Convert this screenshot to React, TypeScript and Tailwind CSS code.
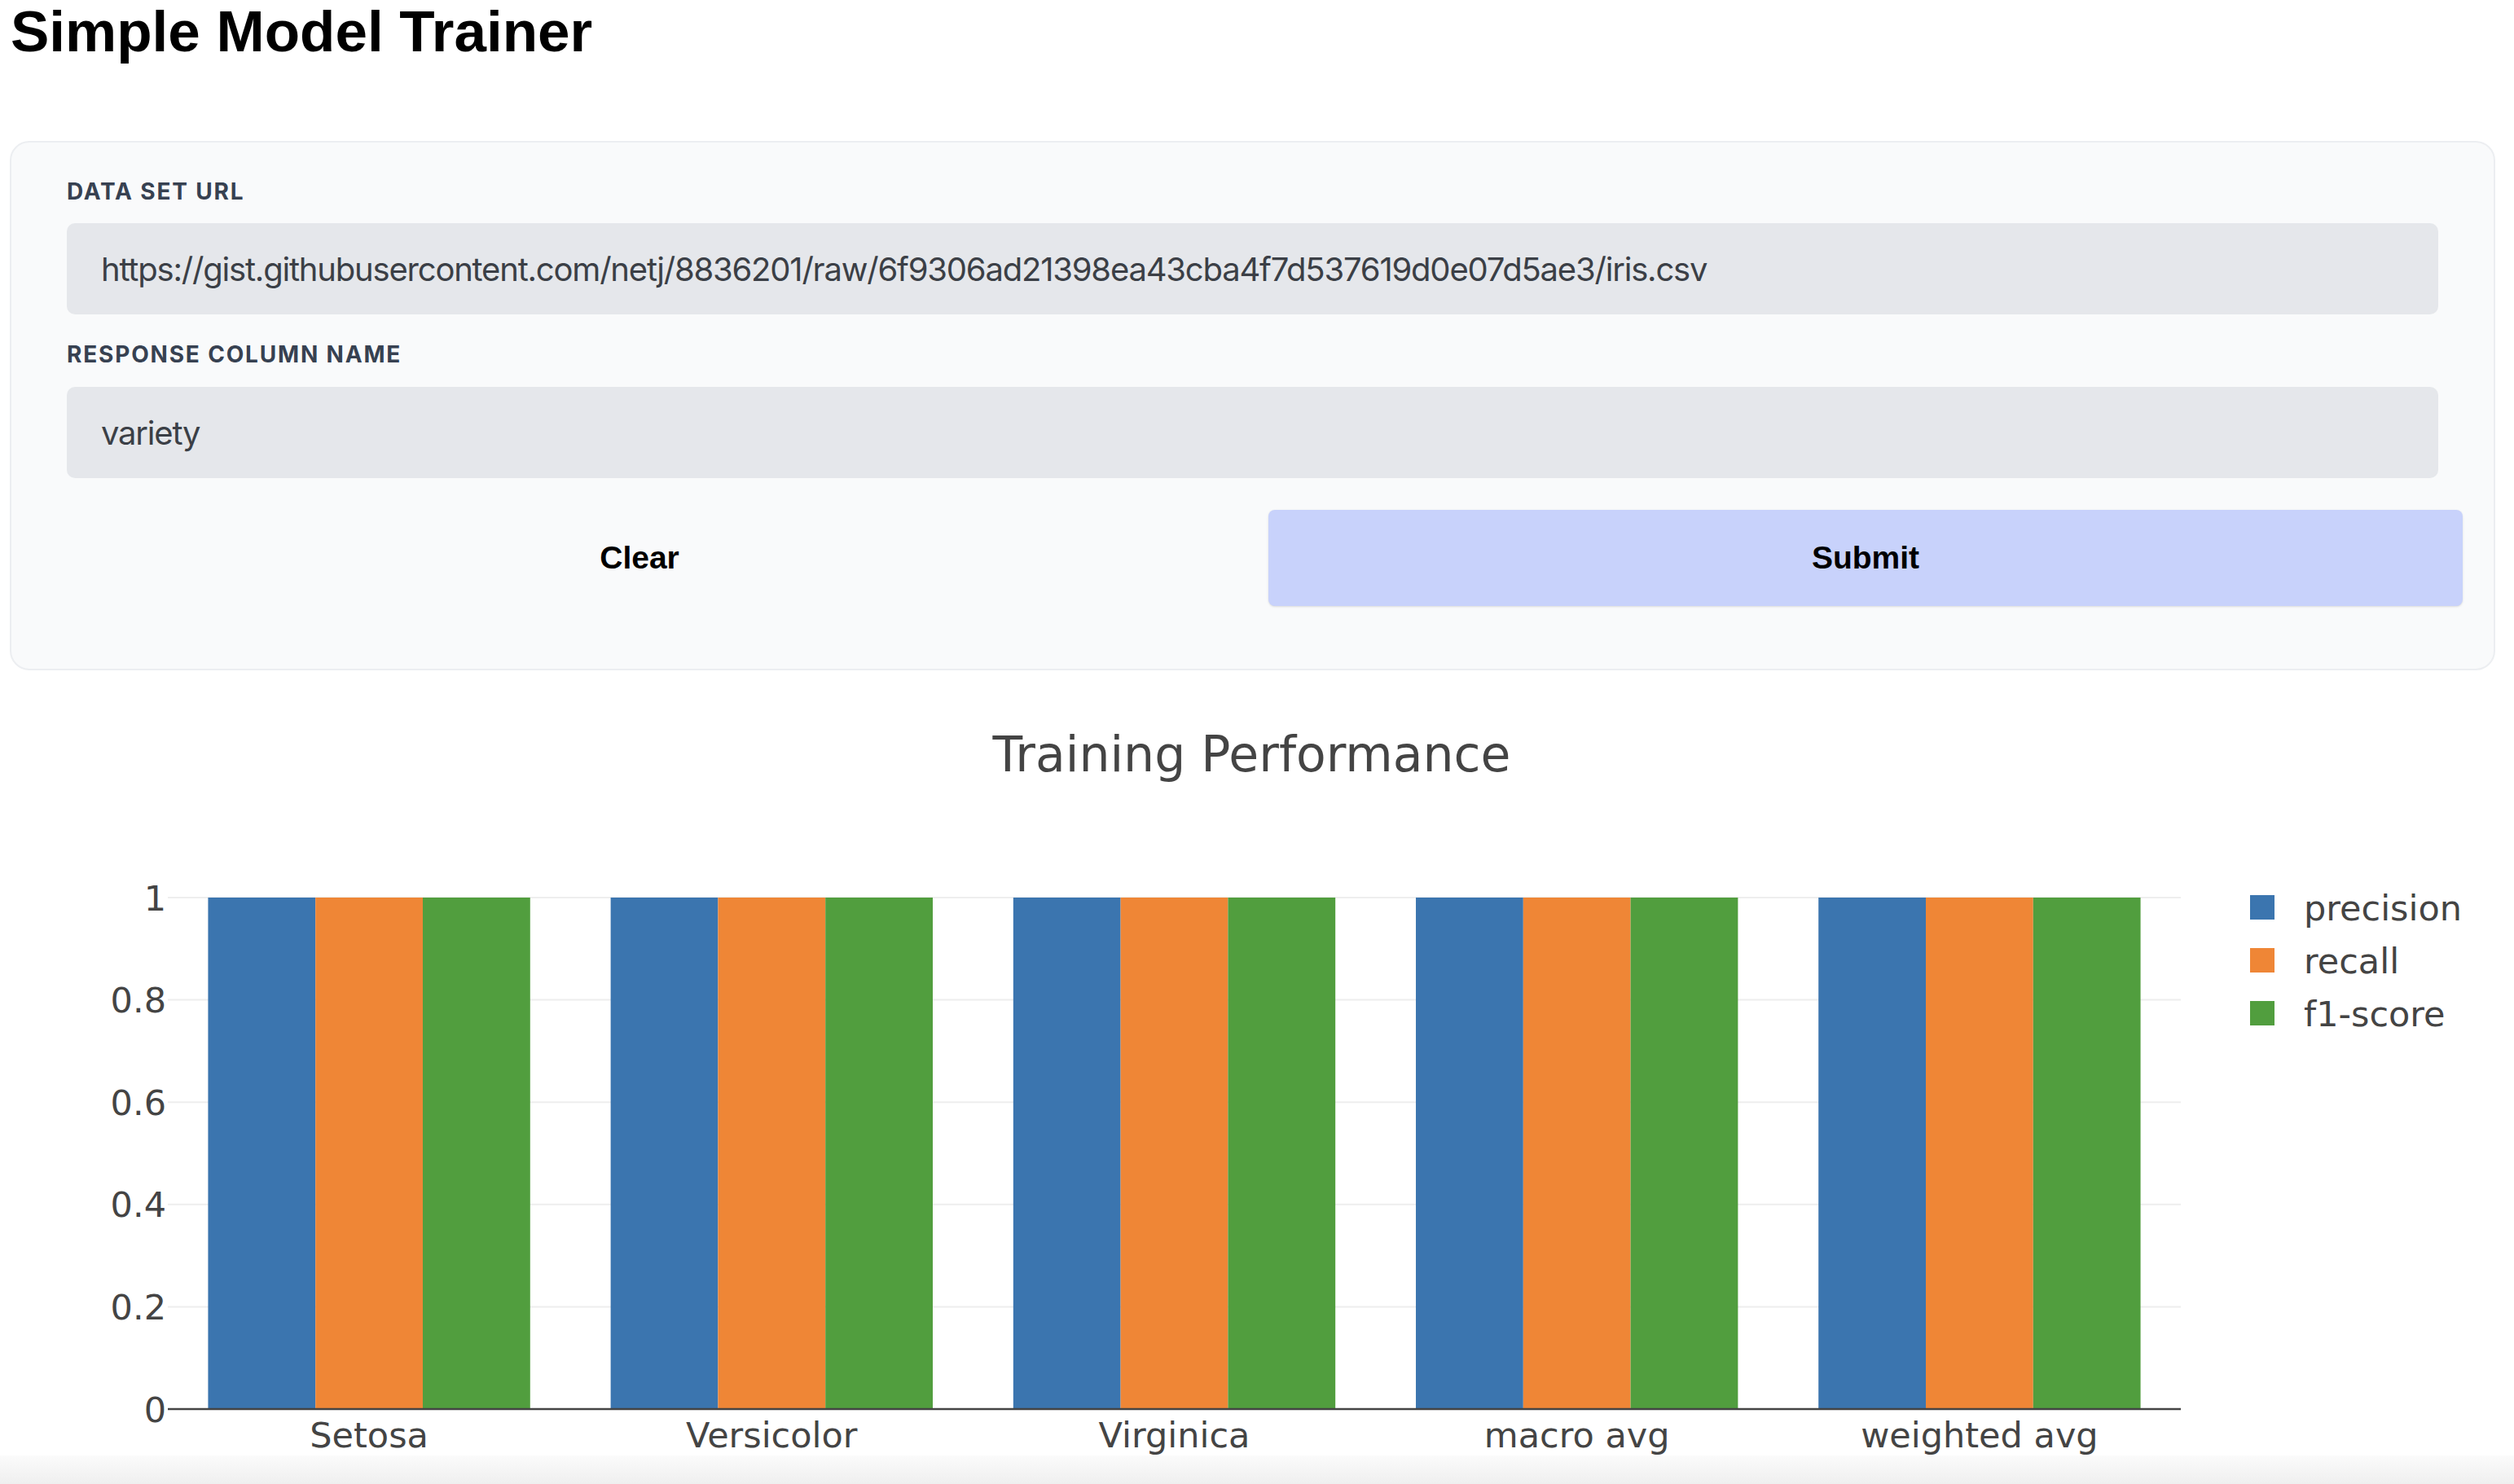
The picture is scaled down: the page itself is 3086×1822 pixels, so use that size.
import React from "react";

const categories = ["Setosa", "Versicolor", "Virginica", "macro avg", "weighted avg"];

const series = [
  { name: "precision", color: "#3b75af", values: [1, 1, 1, 1, 1] },
  { name: "recall", color: "#ef8636", values: [1, 1, 1, 1, 1] },
  { name: "f1-score", color: "#519e3e", values: [1, 1, 1, 1, 1] },
];

const DATA_URL =
  "https://gist.githubusercontent.com/netj/8836201/raw/6f9306ad21398ea43cba4f7d537619d0e07d5ae3/iris.csv";

// plot geometry (svg px)
const PLOT_LEFT = 206;
const PLOT_RIGHT = 2677;
const PLOT_TOP = 141;
const PLOT_BOTTOM = 769;
const TICKS = [0, 0.2, 0.4, 0.6, 0.8, 1];

function yFor(v: number) {
  return PLOT_BOTTOM - v * (PLOT_BOTTOM - PLOT_TOP);
}

function PerformanceChart() {
  const catWidth = (PLOT_RIGHT - PLOT_LEFT) / categories.length;
  const groupWidth = catWidth * 0.8;
  const barWidth = groupWidth / series.length;

  return (
    <svg width={3086} height={826} className="block" fontFamily="'DejaVu Sans', Verdana, sans-serif">
      {TICKS.filter((t) => t > 0).map((t) => (
        <line key={t} x1={PLOT_LEFT} x2={PLOT_RIGHT} y1={yFor(t)} y2={yFor(t)} stroke="#eeeeee" strokeWidth={2} />
      ))}

      {categories.map((c, i) => {
        const start = PLOT_LEFT + catWidth * i + (catWidth - groupWidth) / 2;
        return series.map((s, j) => (
          <rect
            key={c + s.name}
            x={start + barWidth * j}
            y={yFor(s.values[i])}
            width={barWidth}
            height={PLOT_BOTTOM - yFor(s.values[i])}
            fill={s.color}
          />
        ));
      })}

      <line x1={PLOT_LEFT} x2={PLOT_RIGHT} y1={PLOT_BOTTOM} y2={PLOT_BOTTOM} stroke="#444444" strokeWidth={2.5} />

      {TICKS.map((t) => (
        <text key={t} x={204} y={yFor(t) + 15.5} textAnchor="end" fontSize={43} fill="#444444">
          {t === 0 || t === 1 ? String(t) : t.toFixed(1)}
        </text>
      ))}

      {categories.map((c, i) => (
        <text key={c} x={PLOT_LEFT + catWidth * (i + 0.5)} y={816} textAnchor="middle" fontSize={43} fill="#444444">
          {c}
        </text>
      ))}

      {series.map((s, j) => (
        <g key={s.name}>
          <rect x={2762} y={138 + 65 * j} width={30} height={30} fill={s.color} />
          <text x={2828} y={169 + 65 * j} fontSize={43} fill="#444444">
            {s.name}
          </text>
        </g>
      ))}
    </svg>
  );
}

export default function App() {
  return (
    <div className="min-h-screen bg-white overflow-hidden">
      <h1 className="pl-[13px] text-[71px] leading-[78px] font-bold text-black font-['Liberation_Sans',Arial,sans-serif]">
        Simple Model Trainer
      </h1>

      <div className="mt-[95px] ml-[12px] mr-[23px] rounded-[24px] border-2 border-[#eceef1] bg-[#f9fafb] px-[68px] pt-[43px] pb-[77px]">
        <label className="block text-[28px] leading-[34px] font-bold uppercase tracking-[0.065em] text-[#374151] font-['Inter',sans-serif]">
          Data Set URL
        </label>
        <input
          readOnly
          value={DATA_URL}
          className="mt-[22px] block w-full h-[112px] rounded-[10px] bg-[#e5e7eb] px-[42px] text-[40px] tracking-[-0.03em] text-[#3b3f46] outline-none font-['Inter',sans-serif]"
        />

        <label className="mt-[32px] block text-[28px] leading-[34px] font-bold uppercase tracking-[0.065em] text-[#374151] font-['Inter',sans-serif]">
          Response Column Name
        </label>
        <input
          readOnly
          value="variety"
          className="mt-[23px] block w-full h-[112px] rounded-[10px] bg-[#e5e7eb] px-[42px] text-[40px] tracking-[-0.03em] text-[#3b3f46] outline-none font-['Inter',sans-serif]"
        />

        <div className="-mx-[30px] mt-[39px] grid grid-cols-2 gap-[39px]">
          <button className="h-[118px] rounded-[8px] text-[39px] font-bold text-black font-['Liberation_Sans',Arial,sans-serif]">
            Clear
          </button>
          <button className="h-[118px] rounded-[8px] bg-[#c8d2fb] text-[39px] font-bold text-black shadow-sm font-['Liberation_Sans',Arial,sans-serif]">
            Submit
          </button>
        </div>
      </div>

      <h2 className="mt-[68px] pr-[13px] text-center text-[60px] leading-[70px] text-[#444444] font-['DejaVu_Sans',Verdana,sans-serif]">
        Training Performance
      </h2>

      <PerformanceChart />

      <div className="h-[35px] bg-linear-to-b from-[#fbfbfb] to-[#efefef]" />
    </div>
  );
}
